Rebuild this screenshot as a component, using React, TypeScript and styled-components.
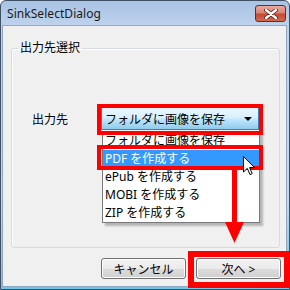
import styled, { createGlobalStyle } from "styled-components";

const GlobalStyle = createGlobalStyle`
	html, body {
		margin: 0;
		padding: 0;
		background: #ffffff;
	}
	body {
		font-family: "Noto Sans", "Noto Sans CJK JP", sans-serif;
	}
`;

const jpFont = `"Noto Sans", "Noto Sans CJK JP", sans-serif`;

const items = ["フォルダに画像を保存", "PDF を作成する", "ePub を作成する", "MOBI を作成する", "ZIP を作成する"];

export default function App() {
	return (
		<>
			<GlobalStyle />
			<Stage>
				<Window>
					<TitleBar>
						<Title>SinkSelectDialog</Title>
						<CloseButton>
							<svg width="14" height="10" viewBox="0 0 14 10">
								<path d="M2 1 L12 9 M12 1 L2 9" stroke="#5a1d16" strokeWidth="4" strokeLinecap="round" />
								<path d="M2 1 L12 9 M12 1 L2 9" stroke="#ffffff" strokeWidth="2.4" strokeLinecap="round" />
							</svg>
						</CloseButton>
					</TitleBar>
					<Client>
						<GroupBox>
							<Legend>出力先選択</Legend>
							<FieldRow>
								<FieldLabel>出力先</FieldLabel>
								<Combo>
									<ComboText>フォルダに画像を保存</ComboText>
									<ComboArrow />
								</Combo>
							</FieldRow>
						</GroupBox>
						<ButtonRow>
							<Button>キャンセル</Button>
							<Button>次へ &gt;</Button>
						</ButtonRow>
					</Client>
				</Window>

				<DropList>
					{items.map((item, i) => (
						<DropItem key={item} $selected={i === 1}>{item}</DropItem>
					))}
				</DropList>

				<RedBox $left={97} $top={104} $width={166} $height={31} $size={4} />
				<RedBox $left={97} $top={145} $width={166} $height={25} $size={4} />
				<RedBox $left={188} $top={251} $width={102} $height={37} $size={6} />

				<Arrow width="20" height="75" viewBox="0 0 20 75">
					<rect x="7" y="0" width="5" height="54" fill="#ff0000" />
					<polygon points="0,53 19,53 9.5,74" fill="#ff0000" />
				</Arrow>

				<Cursor width="13" height="20" viewBox="0 0 13 20">
					<path d="M0.5 0.5 L0.5 16 L4.3 12.4 L7 18.6 L9.2 17.6 L6.6 11.6 L11.6 11.6 Z" fill="#ffffff" stroke="#000000" strokeWidth="1" />
				</Cursor>
			</Stage>
		</>
	);
}

const Stage = styled.div`
	position: relative;
	width: 290px;
	height: 290px;
	overflow: hidden;
`;

const Window = styled.div`
	width: 290px;
	height: 290px;
	box-sizing: border-box;
	border: 1px solid #3e5066;
	border-radius: 6px 6px 0 0;
	background: linear-gradient(#a9c3e3 0px, #bdd2ec 24px, #c3d8ef 200px, #6cc6ea 285px);
	display: flex;
	flex-direction: column;
`;

const TitleBar = styled.div`
	height: 24px;
	display: flex;
	align-items: center;
	justify-content: space-between;
	padding: 0 3px 0 6px;
	flex-shrink: 0;
`;

const Title = styled.span`
	font-family: "Noto Sans", sans-serif;
	font-size: 12px;
	color: #1a1a1a;
	letter-spacing: 0.05px;
`;

const CloseButton = styled.div`
	width: 31px;
	height: 17px;
	box-sizing: border-box;
	border: 1px solid #6b2a22;
	border-radius: 3px;
	background: linear-gradient(#e8a99e 0%, #d98573 45%, #c24a35 55%, #d56a4f 100%);
	display: flex;
	align-items: center;
	justify-content: center;
	margin-top: 1px;
`;

const Client = styled.div`
	flex: 1;
	margin: 0 2px 2px 1px;
	border: 1px solid #8ea8c4;
	background: #f0f0f0;
	display: flex;
	flex-direction: column;
`;

const GroupBox = styled.fieldset`
	margin: 15px 6px 0 8px;
	padding: 0;
	height: 207px;
	box-sizing: border-box;
	border: 1px solid #d5dbe0;
	border-radius: 3px;
	box-shadow: inset 1px 1px 0 #ffffff;
`;

const Legend = styled.legend`
	margin-left: 6px;
	padding: 0 2px;
	font-family: ${jpFont};
	font-size: 12px;
	line-height: 14px;
	color: #000000;
`;

const FieldRow = styled.div`
	margin-top: 52px;
	padding-left: 20px;
	display: flex;
	align-items: center;
`;

const FieldLabel = styled.span`
	width: 69px;
	font-family: ${jpFont};
	font-size: 12px;
	color: #000000;
`;

const Combo = styled.div`
	width: 158px;
	height: 23px;
	box-sizing: border-box;
	border: 1px solid #3c7fb1;
	background: linear-gradient(#eaf6fd 0%, #d9f0fc 45%, #bee6fd 55%, #8fcbec 100%);
	display: flex;
	align-items: center;
	justify-content: space-between;
	padding: 0 6px 0 3px;
`;

const ComboText = styled.span`
	font-family: ${jpFont};
	font-size: 12px;
	color: #000000;
`;

const ComboArrow = styled.span`
	width: 0;
	height: 0;
	border-left: 4px solid transparent;
	border-right: 4px solid transparent;
	border-top: 4px solid #000000;
`;

const ButtonRow = styled.div`
	margin-top: 10px;
	padding-right: 5px;
	display: flex;
	justify-content: flex-end;
	gap: 10px;
`;

const Button = styled.div`
	width: 85px;
	height: 21px;
	box-sizing: border-box;
	border: 1px solid #707070;
	border-radius: 3px;
	background: linear-gradient(#f2f2f2 0%, #ebebeb 50%, #dddddd 50%, #cfcfcf 100%);
	box-shadow: inset 0 0 0 1px #fcfcfc;
	font-family: ${jpFont};
	font-size: 12px;
	color: #000000;
	display: flex;
	align-items: center;
	justify-content: center;
`;

const DropList = styled.div`
	position: absolute;
	left: 102px;
	top: 131px;
	width: 158px;
	box-sizing: border-box;
	border: 1px solid #7a7a7a;
	background: #ffffff;
	box-shadow: 3px 3px 2px rgba(0, 0, 0, 0.25);
`;

const DropItem = styled.div<{ $selected?: boolean }>`
	height: 18px;
	line-height: 18px;
	padding-left: 2px;
	font-family: ${jpFont};
	font-size: 12px;
	white-space: nowrap;
	background: ${(p) => (p.$selected ? "#3399ff" : "transparent")};
	color: ${(p) => (p.$selected ? "#ffffff" : "#000000")};
`;

const RedBox = styled.div<{ $left: number; $top: number; $width: number; $height: number; $size: number }>`
	position: absolute;
	left: ${(p) => p.$left}px;
	top: ${(p) => p.$top}px;
	width: ${(p) => p.$width}px;
	height: ${(p) => p.$height}px;
	box-sizing: border-box;
	border: ${(p) => p.$size}px solid #ff0000;
`;

const Arrow = styled.svg`
	position: absolute;
	left: 225px;
	top: 169px;
`;

const Cursor = styled.svg`
	position: absolute;
	left: 243px;
	top: 156px;
`;
